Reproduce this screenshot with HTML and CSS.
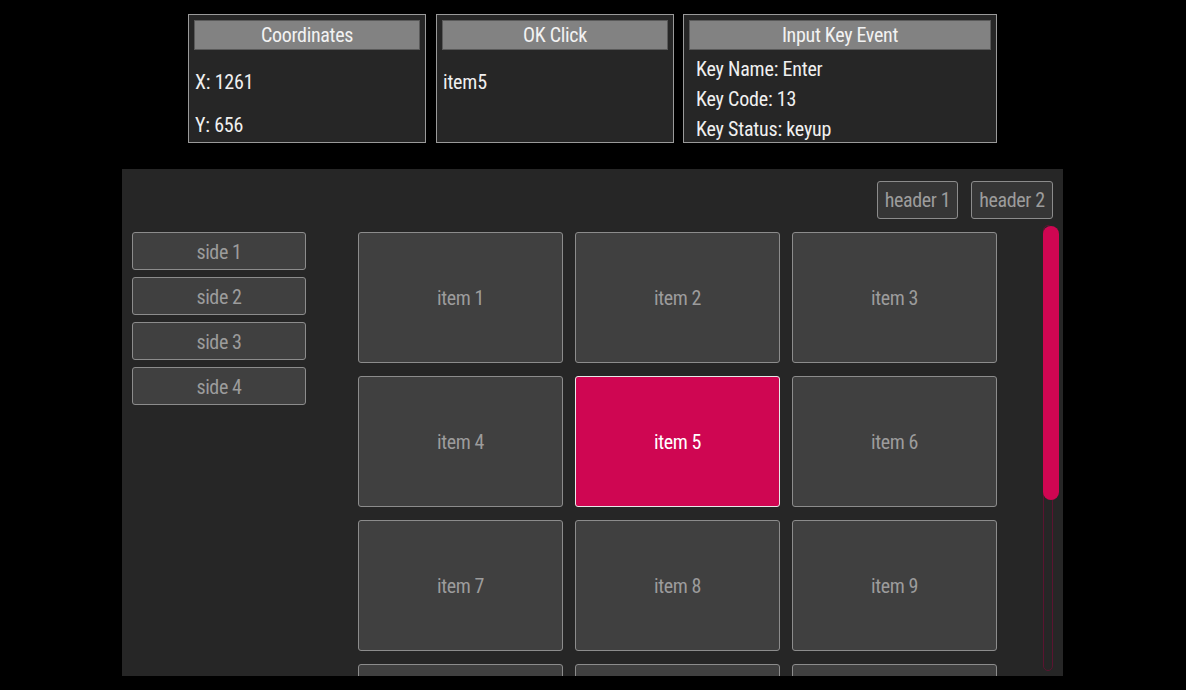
FILE: index.html
```html
<!DOCTYPE html>
<html>
<head>
<meta charset="utf-8">
<link rel="stylesheet" href="styles.css">
</head>
<body>
<div class="top">
  <section class="panel p-coord">
    <div class="panel-title">Coordinates</div>
    <div class="panel-body spaced">
      <div class="line">X: 1261</div>
      <div class="line">Y: 656</div>
    </div>
  </section>
  <section class="panel p-ok">
    <div class="panel-title">OK Click</div>
    <div class="panel-body spaced">
      <div class="line">item5</div>
    </div>
  </section>
  <section class="panel p-key">
    <div class="panel-title">Input Key Event</div>
    <div class="panel-body tight">
      <div class="line">Key Name: Enter</div>
      <div class="line">Key Code: 13</div>
      <div class="line">Key Status: keyup</div>
    </div>
  </section>
</div>

<main class="app">
  <div class="head">
    <button class="btn hbtn">header 1</button>
    <button class="btn hbtn">header 2</button>
  </div>
  <div class="content">
    <nav class="side">
      <button class="btn sbtn">side 1</button>
      <button class="btn sbtn">side 2</button>
      <button class="btn sbtn">side 3</button>
      <button class="btn sbtn">side 4</button>
    </nav>
    <div class="grid">
      <div class="item">item 1</div>
      <div class="item">item 2</div>
      <div class="item">item 3</div>
      <div class="item">item 4</div>
      <div class="item focused">item 5</div>
      <div class="item">item 6</div>
      <div class="item">item 7</div>
      <div class="item">item 8</div>
      <div class="item">item 9</div>
      <div class="item"></div>
      <div class="item"></div>
      <div class="item"></div>
    </div>
    <div class="scroll"><div class="thumb"></div></div>
  </div>
</main>
</body>
</html>
```
FILE: styles.css
```css
* { box-sizing: border-box; }
html, body { margin: 0; padding: 0; }
body {
  background: #000;
  width: 1186px;
  height: 690px;
  overflow: hidden;
  font-family: "Roboto Condensed", Roboto, "Liberation Sans", sans-serif;
  font-stretch: condensed;
}
.top {
  display: flex;
  gap: 10px;
  padding: 14px 0 0 188px;
}
.panel {
  height: 129px;
  border: 1px solid #9a9a9a;
  background: #262626;
  padding: 5px;
  color: #f0f0f0;
}
.p-coord, .p-ok { width: 238px; }
.p-key { width: 314px; margin-left: -1px; }
.panel-title {
  height: 30px;
  background: #828282;
  border: 1px solid #5a5a5a;
  text-align: center;
  font-size: 20px;
  line-height: 29px;
  color: #f2f2f2;
  letter-spacing: -0.3px;
}
.panel-body { display: flex; flex-direction: column; }
.line { font-size: 20px; line-height: 30px; letter-spacing: -0.2px; padding-left: 1px; }
.spaced { padding-top: 17px; gap: 13px; }
.tight { padding-top: 4px; padding-left: 6px; }

.app {
  margin: 26px 0 0 122px;
  width: 941px;
  height: 507px;
  background: #262626;
  overflow: hidden;
  padding: 12px 10px 0 10px;
  display: flex;
  flex-direction: column;
}
.head {
  display: flex;
  justify-content: flex-end;
  gap: 13px;
}
.btn {
  font-family: inherit;
  font-stretch: condensed;
  background: #404040;
  border: 1px solid #8c8c8c;
  border-radius: 3px;
  color: #9c9c9c;
  font-size: 20px;
  letter-spacing: -0.4px;
  padding: 0;
  margin: 0;
}
.hbtn { height: 38px; width: 82px; background: #363636; }
.hbtn:first-child { width: 81px; }
.content {
  display: flex;
  margin-top: 6px;
  align-items: flex-start;
}
.side {
  width: 174px;
  display: flex;
  flex-direction: column;
  gap: 7px;
  margin-top: 7px;
}
.sbtn { height: 38px; width: 174px; padding-top: 2px; }
.grid {
  margin: 7px 0 0 52px;
  display: grid;
  grid-template-columns: repeat(3, 205px);
  grid-auto-rows: 131px;
  column-gap: 12px;
  row-gap: 13px;
}
.item {
  background: #404040;
  border: 1px solid #8c8c8c;
  border-radius: 3px;
  color: #9c9c9c;
  font-size: 20px;
  letter-spacing: -0.4px;
  display: flex;
  align-items: center;
  justify-content: center;
  padding-top: 1px;
}
.item.focused {
  background: #cf0652;
  border-color: #e8e8e8;
  color: #fff;
}
.scroll {
  margin-left: 46px;
  width: 16px;
  height: 446px;
  border: 1px solid #5a1430;
  border-radius: 8px;
  position: relative;
}
.thumb {
  position: absolute;
  left: -1px;
  top: 0;
  width: 16px;
  height: 274px;
  background: #cf0652;
  border-radius: 8px;
}
```
